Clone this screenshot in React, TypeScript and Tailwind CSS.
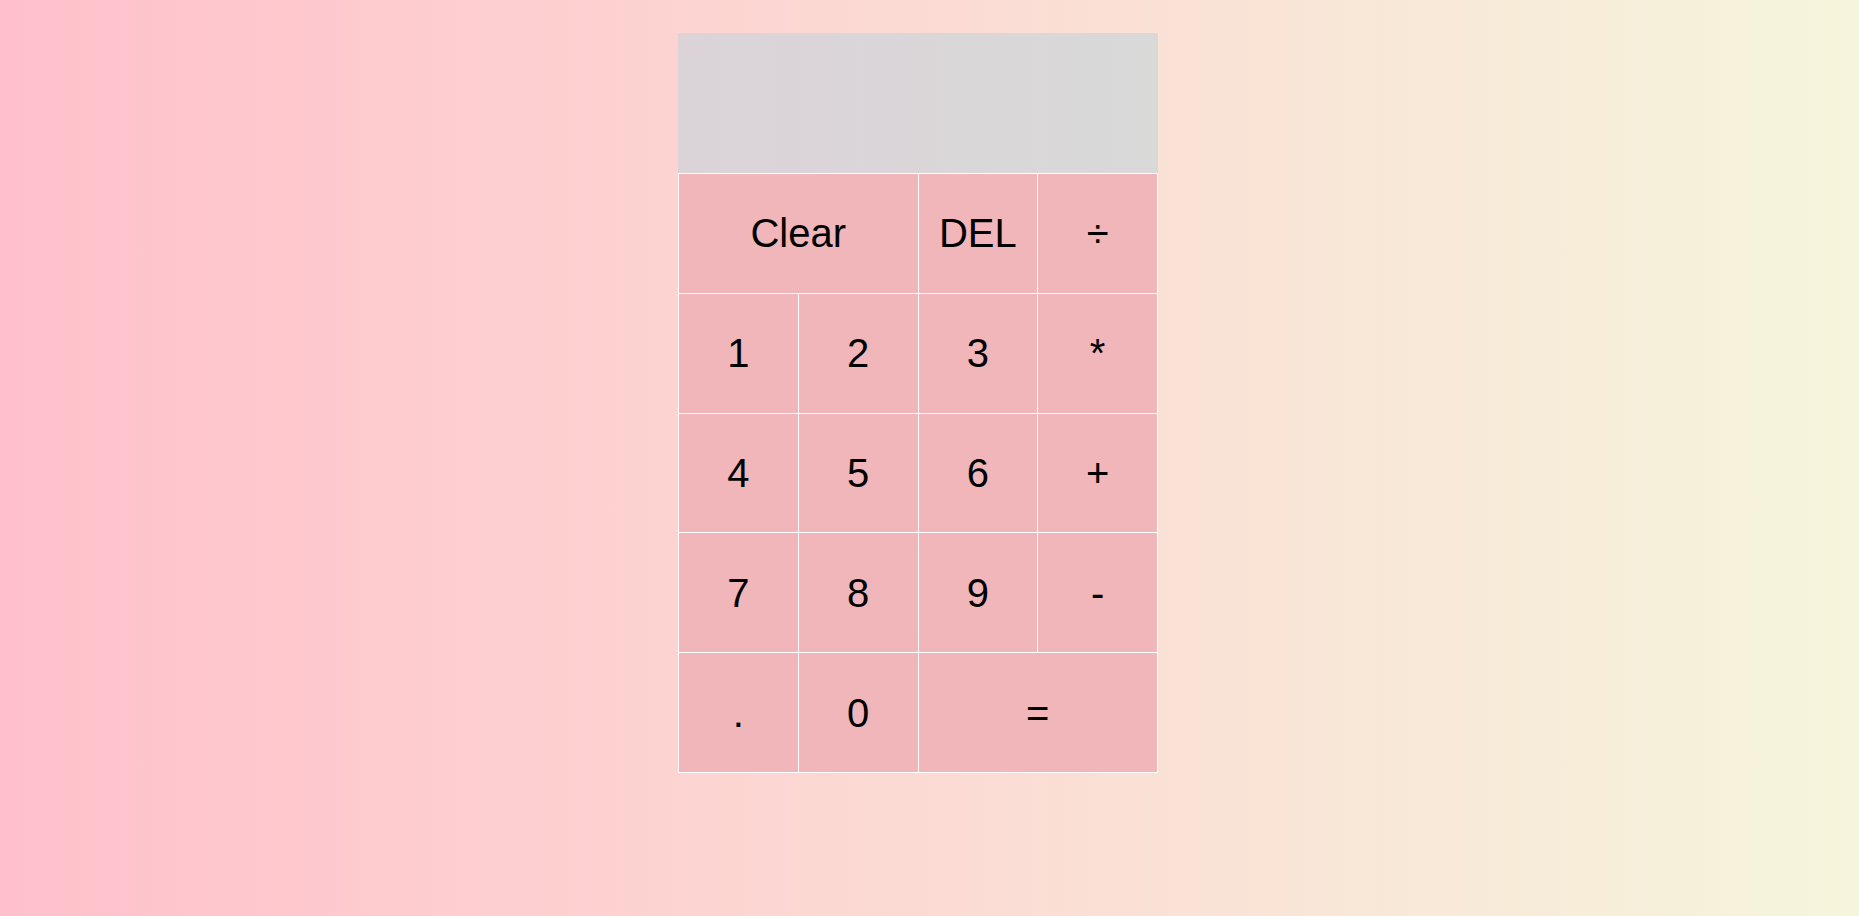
import React, { useState } from 'react';

const keys: { label: string; span?: boolean }[] = [
  { label: 'Clear', span: true },
  { label: 'DEL' },
  { label: '÷' },
  { label: '1' },
  { label: '2' },
  { label: '3' },
  { label: '*' },
  { label: '4' },
  { label: '5' },
  { label: '6' },
  { label: '+' },
  { label: '7' },
  { label: '8' },
  { label: '9' },
  { label: '-' },
  { label: '.' },
  { label: '0' },
  { label: '=', span: true },
];

const App: React.FC = () => {
  const [value, setValue] = useState('');

  const press = (k: string) => {
    if (k === 'Clear') return setValue('');
    if (k === 'DEL') return setValue((v) => v.slice(0, -1));
    if (k === '=') return;
    setValue((v) => v + k);
  };

  return (
    <div
      className="min-h-screen w-full bg-linear-to-r from-[#ffc0cb] to-[#f5f5dc] flex justify-center pt-[33px] pr-[23px]"
      style={{ fontFamily: '"Liberation Sans", Arial, sans-serif' }}
    >
      <div className="w-[480px] flex flex-col">
        {/* Display */}
        <div className="h-[140px] bg-linear-to-r from-[#dbd3d8] to-[#d9d9d8] flex items-end justify-end px-3 pb-3 text-[40px] text-black break-all">
          {value}
        </div>

        {/* Keys */}
        <div className="grid grid-cols-4 auto-rows-[118.8px] gap-px bg-white p-px">
          {keys.map((k) => (
            <button
              key={k.label}
              onClick={() => press(k.label)}
              className={`bg-[#f0b6b9] text-black text-[40px] flex items-center justify-center leading-none cursor-pointer ${
                k.span ? 'col-span-2' : ''
              }`}
            >
              {k.label}
            </button>
          ))}
        </div>
      </div>
    </div>
  );
};

export default App;
